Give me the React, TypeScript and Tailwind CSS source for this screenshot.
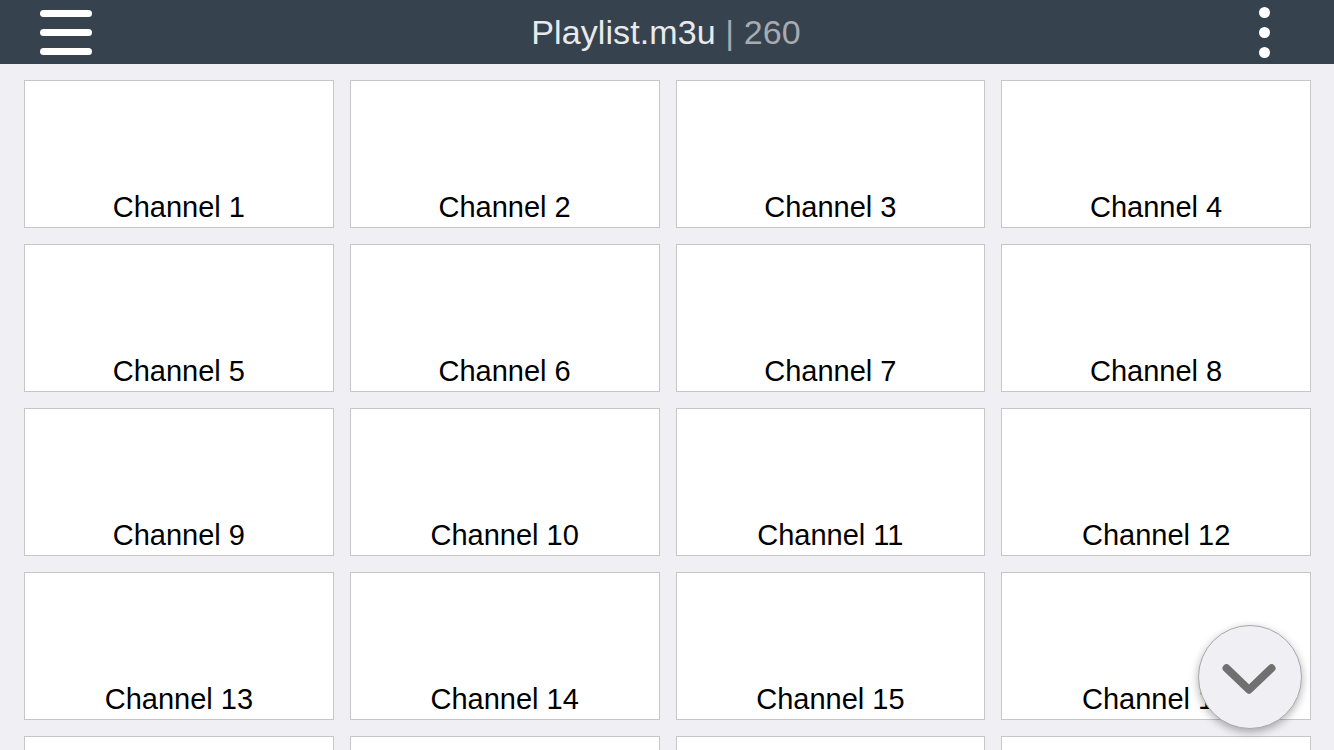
const channels = Array.from({ length: 20 }, (_, i) => `Channel ${i + 1}`);

export default function App() {
  return (
    <div
      className="h-screen overflow-hidden bg-[#efeff4]"
      style={{ fontFamily: '"Liberation Sans", Arial, sans-serif' }}
    >
      {/* Top bar */}
      <header className="h-16 bg-[#36424d] grid grid-cols-[1fr_auto_1fr] items-center pl-10 pr-[64px]">
        <div className="flex flex-col gap-[12px] w-[52px]">
          <span className="block h-[7px] rounded-full bg-white" />
          <span className="block h-[7px] rounded-full bg-white" />
          <span className="block h-[7px] rounded-full bg-white" />
        </div>
        <h1 className="text-[34px] leading-none tracking-[0.1px] text-[#e9eaec] ml-[22px]">
          Playlist.m3u <span className="text-[#a6abb1]">| 260</span>
        </h1>
        <div className="flex flex-col items-center gap-[9px] justify-self-end">
          <span className="block w-[11px] h-[11px] rounded-full bg-white" />
          <span className="block w-[11px] h-[11px] rounded-full bg-white" />
          <span className="block w-[11px] h-[11px] rounded-full bg-white" />
        </div>
      </header>

      {/* Channel grid */}
      <main className="grid grid-cols-4 gap-4 pl-6 pr-[23px] pt-4">
        {channels.map((name) => (
          <div
            key={name}
            className="h-[148px] bg-white border border-[#c6c6ca] flex items-end justify-center pb-[5px]"
          >
            <span className="text-[29px] leading-none text-black">{name}</span>
          </div>
        ))}
      </main>

      {/* Scroll down button */}
      <button className="fixed right-[32px] bottom-[21px] w-[104px] h-[104px] rounded-full bg-[#efeff4] border border-[#a8a8ac] shadow-[0_3px_8px_rgba(0,0,0,0.3)] flex items-center justify-center">
        <svg width="104" height="104" viewBox="0 0 104 104" fill="none">
          <polyline
            points="28,43 51,65 74,43"
            stroke="#707070"
            strokeWidth="8"
            strokeLinecap="round"
            strokeLinejoin="round"
          />
        </svg>
      </button>
    </div>
  );
}
